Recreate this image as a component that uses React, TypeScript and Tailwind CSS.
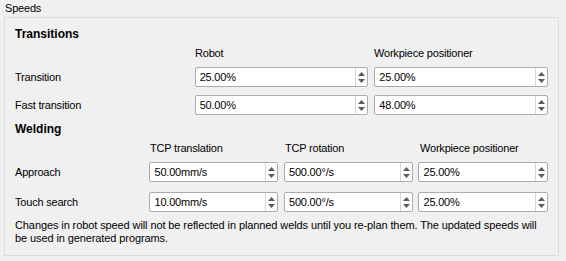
import React from "react";

function Spin({ value, w }: { value: string; w: string }) {
  return (
    <div className={`${w} h-[20px] flex bg-white border border-[#acacac] rounded-[2px]`}>
      <div className="flex-1 flex items-center pl-[4px] text-[11px] leading-[13px] tracking-[-0.2px] text-black">{value}</div>
      <div className="w-[12px] border-l border-[#d6d6d6] flex flex-col items-center justify-center gap-[3px]">
        <svg width="7" height="4" viewBox="0 0 7 4"><path d="M0 4 L3.5 0 L7 4 Z" fill="#5a5a5a" /></svg>
        <svg width="7" height="4" viewBox="0 0 7 4"><path d="M0 0 L3.5 4 L7 0 Z" fill="#5a5a5a" /></svg>
      </div>
    </div>
  );
}

export default function App() {
  const font = { fontFamily: '"Liberation Sans", Arial, sans-serif' };
  return (
    <div className="w-[566px] h-[261px] bg-[#f0f0f0] text-black overflow-hidden" style={font}>
      <div className="h-[17px] pl-[5px] text-[11px] leading-[16px] tracking-[-0.2px]">Speeds</div>
      <div className="ml-[4px] w-[555px] h-[239px] border border-[#dcdcdc] px-[10px] text-[11px] tracking-[-0.2px]">
        <div className="mt-[9px] h-[14px] leading-[14px] font-bold text-[12px] tracking-normal">Transitions</div>
        <div className="mt-[5px] h-[14px] leading-[14px] flex">
          <div className="w-[180px]" />
          <div className="w-[179px]">Robot</div>
          <div>Workpiece positioner</div>
        </div>
        <div className="mt-[7px] flex items-center h-[20px]">
          <div className="w-[180px]">Transition</div>
          <Spin value="25.00%" w="w-[174px]" />
          <div className="w-[6px]" />
          <Spin value="25.00%" w="w-[174px]" />
        </div>
        <div className="mt-[8px] flex items-center h-[20px]">
          <div className="w-[180px]">Fast transition</div>
          <Spin value="50.00%" w="w-[174px]" />
          <div className="w-[6px]" />
          <Spin value="48.00%" w="w-[174px]" />
        </div>
        <div className="mt-[7px] h-[14px] leading-[14px] font-bold text-[12px] tracking-normal">Welding</div>
        <div className="mt-[5px] h-[14px] leading-[14px] flex">
          <div className="w-[135px]" />
          <div className="w-[135px]">TCP translation</div>
          <div className="w-[135px]">TCP rotation</div>
          <div>Workpiece positioner</div>
        </div>
        <div className="mt-[7px] flex items-center h-[20px]">
          <div className="w-[135px]">Approach</div>
          <Spin value="50.00mm/s" w="w-[129px]" />
          <div className="w-[6px]" />
          <Spin value="500.00°/s" w="w-[129px]" />
          <div className="w-[6px]" />
          <Spin value="25.00%" w="w-[130px]" />
        </div>
        <div className="mt-[10px] flex items-center h-[20px]">
          <div className="w-[135px]">Touch search</div>
          <Spin value="10.00mm/s" w="w-[129px]" />
          <div className="w-[6px]" />
          <Spin value="500.00°/s" w="w-[129px]" />
          <div className="w-[6px]" />
          <Spin value="25.00%" w="w-[130px]" />
        </div>
        <div className="mt-[7px] leading-[13px] whitespace-nowrap tracking-[-0.1px]">
          <div>Changes in robot speed will not be reflected in planned welds until you re-plan them. The updated speeds will</div>
          <div>be used in generated programs.</div>
        </div>
      </div>
    </div>
  );
}
